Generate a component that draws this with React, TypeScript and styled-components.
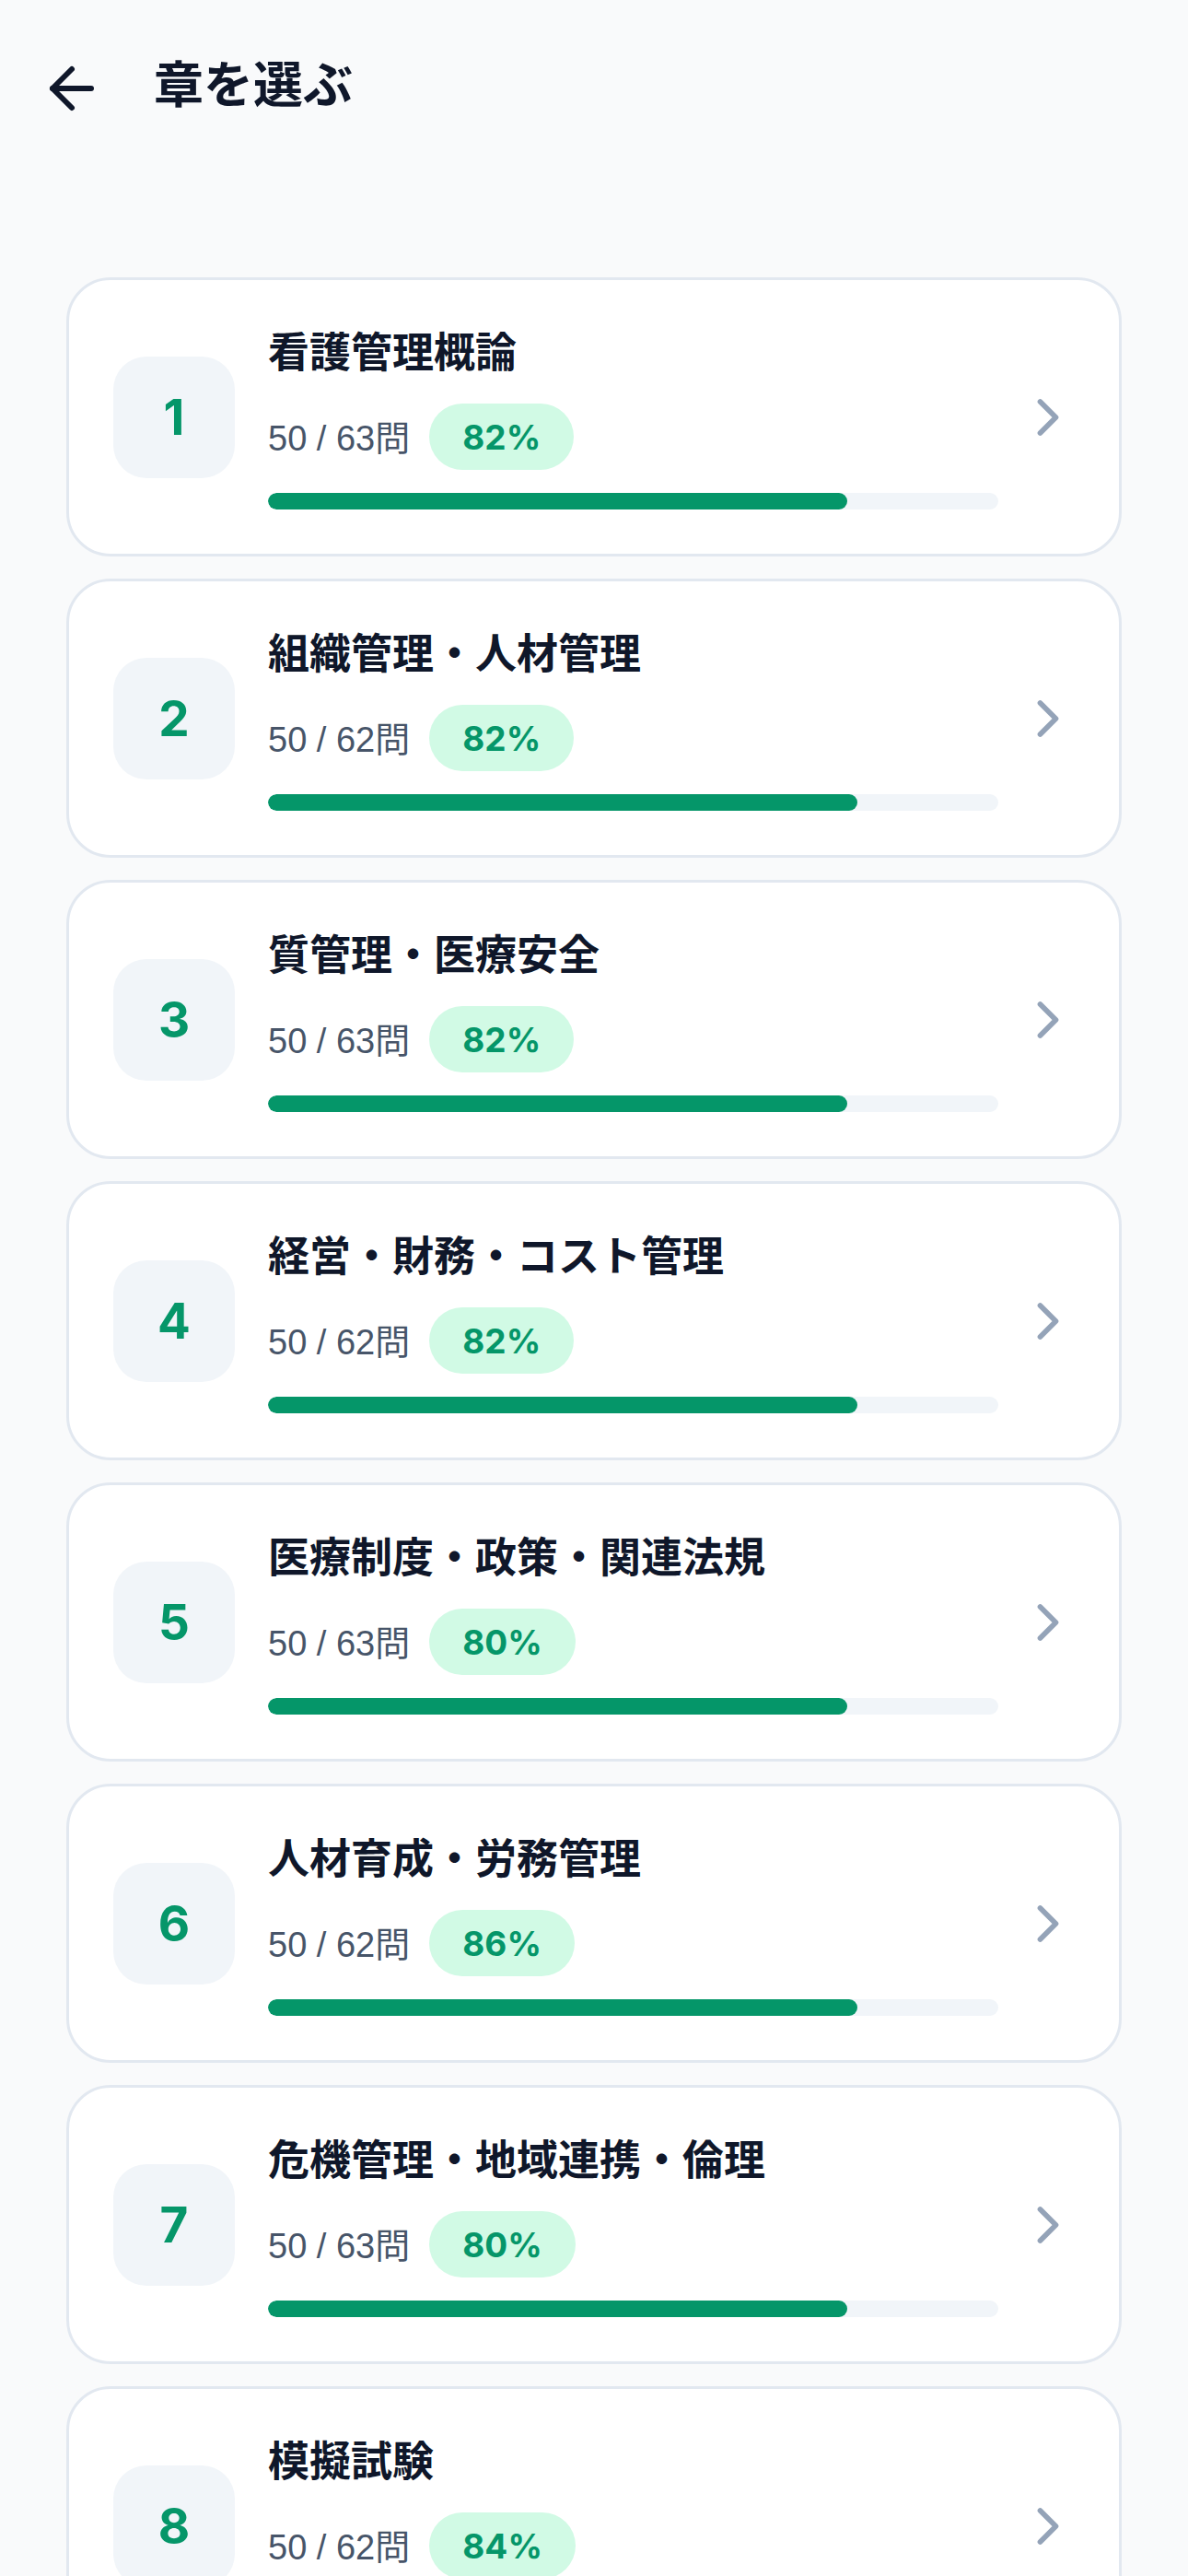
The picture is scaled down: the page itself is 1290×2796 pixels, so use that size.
import React from "react";
import styled, { createGlobalStyle } from "styled-components";
import { ArrowLeft, ChevronRight } from "lucide-react";

const GlobalStyle = createGlobalStyle`
  html, body {
    margin: 0;
    padding: 0;
    background: #F9FAFB;
  }
  body {
    font-family: Inter, "Noto Sans CJK JP", "Noto Sans", sans-serif;
    color: #0F172A;
  }
  * { box-sizing: border-box; }
`;

const Page = styled.div`
  min-height: 2796px;
  background: #F9FAFB;
`;

const Header = styled.header`
  height: 192px;
  display: flex;
  align-items: center;
  padding-left: 42px;
  gap: 53px;
`;

const BackButton = styled.button`
  width: 72px;
  height: 72px;
  padding: 0;
  border: none;
  background: transparent;
  display: flex;
  align-items: center;
  justify-content: center;
  color: #0F172A;
`;

const PageTitle = styled.h1`
  margin: 0;
  font-size: 54px;
  line-height: 54px;
  font-weight: 700;
  color: #0F172A;
  padding-bottom: 6px;
`;

const List = styled.main`
  padding: 109px 72px 72px;
  display: flex;
  flex-direction: column;
  gap: 24px;
`;

const Card = styled.div`
  background: #FFFFFF;
  border: 3px solid #E2E8F0;
  border-radius: 48px;
  padding: 48px 43px 48px 48px;
  display: flex;
  align-items: center;
`;

const NumberBox = styled.div`
  width: 132px;
  height: 132px;
  flex: none;
  border-radius: 36px;
  background: #F1F5F9;
  color: #059669;
  font-size: 53px;
  font-weight: 700;
  display: flex;
  align-items: center;
  justify-content: center;
`;

const Body = styled.div`
  flex: 1;
  min-width: 0;
  margin-left: 36px;
  margin-right: 20px;
  display: flex;
  flex-direction: column;
`;

const ChapterTitle = styled.div`
  font-size: 45px;
  line-height: 62px;
  font-weight: 700;
  color: #0F172A;
  white-space: nowrap;
`;

const StatsRow = styled.div`
  margin-top: 24px;
  height: 72px;
  display: flex;
  align-items: center;
  gap: 21px;
`;

const Count = styled.span`
  font-family: "Liberation Sans", "Noto Sans CJK JP", sans-serif;
  font-size: 38px;
  color: #475569;
  padding-bottom: 4px;
`;

const Pill = styled.span`
  height: 72px;
  padding: 0 36px;
  border-radius: 36px;
  background: #D1FAE5;
  color: #059669;
  font-size: 37px;
  font-weight: 700;
  display: flex;
  align-items: center;
`;

const Track = styled.div`
  margin-top: 25px;
  height: 18px;
  border-radius: 9px;
  background: #F1F5F9;
  overflow: hidden;
`;

const Fill = styled.div`
  height: 100%;
  border-radius: 9px;
  background: #059669;
`;

const Chevron = styled.div`
  flex: none;
  width: 68px;
  height: 68px;
  color: #94A3B8;
  display: flex;
`;

const chapters = [
  { n: 1, title: "看護管理概論", done: 50, total: 63, pct: 82 },
  { n: 2, title: "組織管理・人材管理", done: 50, total: 62, pct: 82 },
  { n: 3, title: "質管理・医療安全", done: 50, total: 63, pct: 82 },
  { n: 4, title: "経営・財務・コスト管理", done: 50, total: 62, pct: 82 },
  { n: 5, title: "医療制度・政策・関連法規", done: 50, total: 63, pct: 80 },
  { n: 6, title: "人材育成・労務管理", done: 50, total: 62, pct: 86 },
  { n: 7, title: "危機管理・地域連携・倫理", done: 50, total: 63, pct: 80 },
  { n: 8, title: "模擬試験", done: 50, total: 62, pct: 84 },
];

export default function App() {
  return (
    <Page>
      <GlobalStyle />
      <Header>
        <BackButton aria-label="戻る">
          <ArrowLeft size={72} strokeWidth={2} />
        </BackButton>
        <PageTitle>章を選ぶ</PageTitle>
      </Header>
      <List>
        {chapters.map((c) => (
          <Card key={c.n}>
            <NumberBox>{c.n}</NumberBox>
            <Body>
              <ChapterTitle>{c.title}</ChapterTitle>
              <StatsRow>
                <Count>
                  {c.done} / {c.total}問
                </Count>
                <Pill>{c.pct}%</Pill>
              </StatsRow>
              <Track>
                <Fill style={{ width: `${(c.done / c.total) * 100}%` }} />
              </Track>
            </Body>
            <Chevron>
              <ChevronRight size={68} strokeWidth={2} />
            </Chevron>
          </Card>
        ))}
      </List>
    </Page>
  );
}
